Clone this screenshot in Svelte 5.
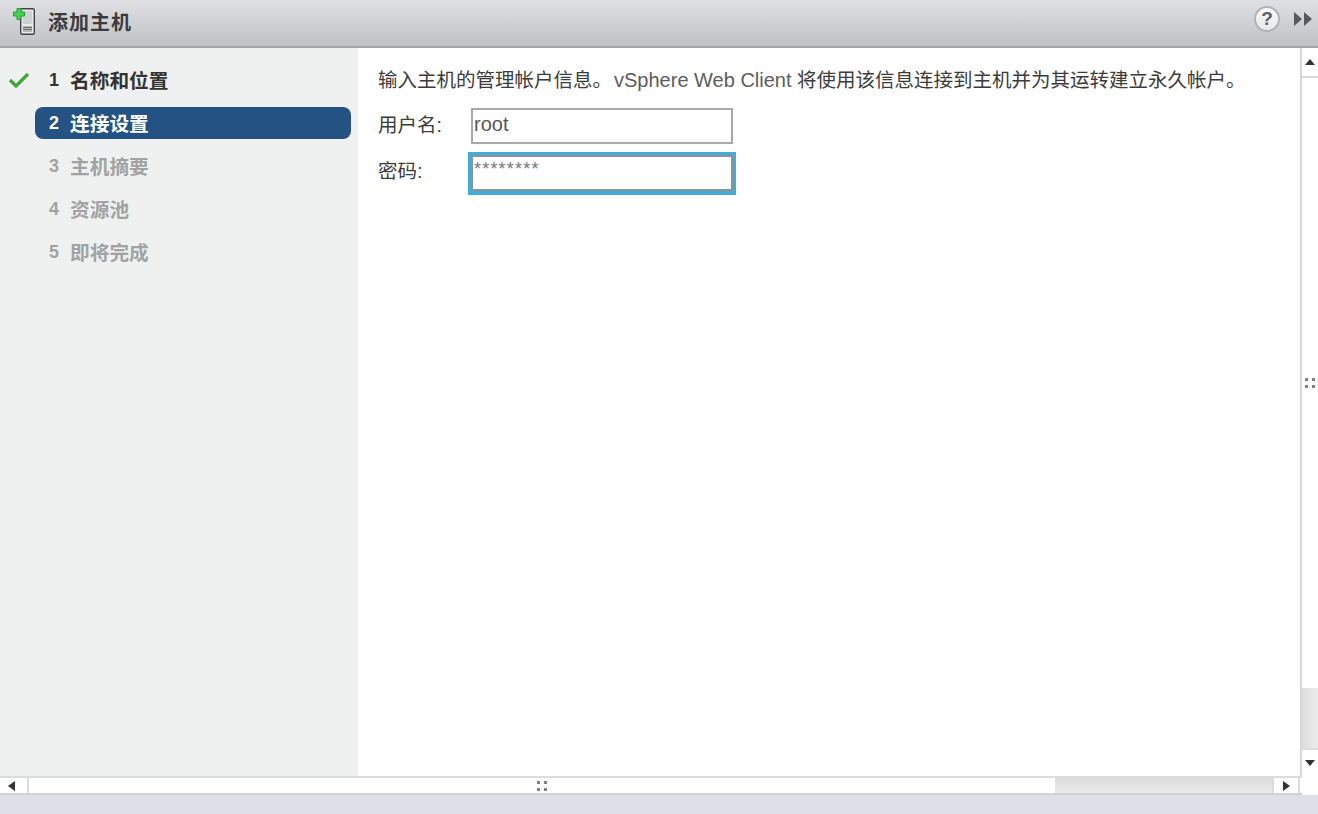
<script lang="ts">
	const steps = [
		{ n: 1, label: "名称和位置", state: "done" },
		{ n: 2, label: "连接设置", state: "active" },
		{ n: 3, label: "主机摘要", state: "todo" },
		{ n: 4, label: "资源池", state: "todo" },
		{ n: 5, label: "即将完成", state: "todo" },
	];
</script>

<div class="dialog">
	<header class="title-bar">
		<svg class="host-icon" width="26" height="30" viewBox="0 0 26 30">
			<rect x="9.7" y="2.7" width="13.6" height="25.6" rx="1.5" fill="#e9eaea" stroke="#3f4344" stroke-width="1.4" />
			<rect x="12" y="5" width="9" height="13" fill="#cfd1d1" />
			<rect x="12" y="20" width="9" height="6" fill="#b5b8b8" />
			<path d="M12 21.5h9M12 23.5h9" stroke="#5a5e5e" stroke-width="0.8" />
			<path d="M6 2.5h4v3.5h3.5v4H10v3.5H6V10H2.5V6H6z" fill="#46d052" stroke="#2b9a3a" stroke-width="1" stroke-linejoin="round" />
		</svg>
		<h1>添加主机</h1>
		<div class="title-tools">
			<span class="help">?</span>
			<svg width="18" height="14" viewBox="0 0 18 14"><path d="M0 0l8 7-8 7zM10 0l8 7-8 7z" fill="#565a5e" /></svg>
		</div>
	</header>

	<div class="main">
		<div class="viewport">
			<nav class="steps">
				{#each steps as step}
					<div class="step {step.state}">
						<span class="mark">
							{#if step.state === "done"}
								<svg width="22" height="18" viewBox="0 0 22 18"><path d="M2 9l6 6L20 3" fill="none" stroke="#3fa535" stroke-width="3.2" /></svg>
							{/if}
						</span>
						<span class="pill"><b>{step.n}</b><b class="name">{step.label}</b></span>
					</div>
				{/each}
			</nav>
			<section class="content">
				<p class="intro">输入主机的管理帐户信息。<span>vSphere Web Client</span> 将使用该信息连接到主机并为其运转建立永久帐户。</p>
				<div class="form">
					<label for="user">用户名:</label>
					<input id="user" value="root" />
					<label for="pw">密码:</label>
					<input id="pw" class="focused" value="********" />
				</div>
			</section>
		</div>

		<div class="vscroll">
			<button class="arrow" aria-label="up"><i class="tri up"></i></button>
			<div class="thumb-v"><span class="grip"></span></div>
			<div class="track-v"></div>
			<button class="arrow bottom" aria-label="down"><i class="tri down"></i></button>
		</div>

		<div class="hscroll">
			<button class="arrow-h start" aria-label="left"><i class="tri left"></i></button>
			<div class="thumb-h"><span class="grip"></span></div>
			<div class="track-h"></div>
			<button class="arrow-h end" aria-label="right"><i class="tri right"></i></button>
		</div>
		<div class="corner"></div>
	</div>

	<div class="foot"></div>
</div>

<style>
	:global(body) {
		margin: 0;
		font-family: "Liberation Sans", "Noto Sans CJK SC", sans-serif;
	}

	.dialog {
		width: 1318px;
		height: 814px;
		display: flex;
		flex-direction: column;
		background: #fff;
		overflow: hidden;
	}

	.title-bar {
		height: 42px;
		flex: none;
		box-sizing: content-box;
		display: flex;
		align-items: center;
		padding: 0 0 4px 11px;
		border-bottom: 2px solid #a2a4a6;
		background: linear-gradient(#dfe0e4, #bfc1c3);
	}

	.host-icon {
		margin-right: 11px;
		flex: none;
	}

	h1 {
		margin: 0;
		font-size: 20px;
		font-weight: 700;
		color: #3b3b3b;
		letter-spacing: 1px;
	}

	.title-tools {
		margin-left: auto;
		margin-right: 6px;
		padding-bottom: 4px;
		display: flex;
		align-items: center;
		gap: 14px;
	}

	.help {
		width: 26px;
		height: 26px;
		box-sizing: border-box;
		border: 2px solid #b0b2b4;
		border-radius: 50%;
		background: linear-gradient(#fafafa, #e8e8e8);
		color: #5c5f62;
		font-size: 19px;
		font-weight: 700;
		line-height: 22px;
		text-align: center;
	}

	.main {
		flex: 1;
		display: grid;
		grid-template-columns: 1fr 16px;
		grid-template-rows: 1fr 19px;
		min-height: 0;
	}

	.viewport {
		display: flex;
		min-height: 0;
		border-right: 2px solid #d8d8d8;
	}

	.steps {
		width: 358px;
		flex: none;
		box-sizing: border-box;
		padding-top: 16px;
		display: flex;
		flex-direction: column;
		gap: 11px;
		background: #eff1f1;
	}

	.step {
		display: flex;
		height: 32px;
		align-items: center;
	}

	.mark {
		width: 35px;
		flex: none;
		display: flex;
		justify-content: center;
		padding-left: 2px;
		box-sizing: border-box;
	}

	.pill {
		width: 316px;
		height: 32px;
		box-sizing: border-box;
		padding-left: 14px;
		display: flex;
		align-items: center;
		gap: 11px;
		border-radius: 8px;
		font-size: 19.7px;
		color: #333;
	}

	.pill b:first-child {
		font-size: 18px;
	}

	.name {
		padding-bottom: 2px;
	}

	.active .pill {
		background: #245282;
		color: #fff;
	}

	.todo .pill {
		color: #a1a3a3;
	}

	.content {
		flex: 1;
		padding: 19px 0 0 20px;
		color: #444;
	}

	.intro {
		margin: 0 0 15px;
		font-size: 19.5px;
		line-height: 26px;
		white-space: nowrap;
		color: #3c3c3c;
	}

	.intro span {
		margin-left: 2px;
		font-size: 20px;
		color: #5c5c5c;
	}

	.form {
		display: grid;
		grid-template-columns: 93px 262px;
		row-gap: 9px;
		align-items: center;
	}

	label {
		padding-bottom: 5px;
		font-size: 19.5px;
		color: #3c3c3c;
	}

	input {
		width: 262px;
		height: 36px;
		box-sizing: border-box;
		border: 2px solid #a9a9a9;
		padding: 0 0 4px 1px;
		font: 20px "Liberation Sans", sans-serif;
		color: #555;
		background: #fff;
		outline: none;
	}

	.focused {
		box-shadow: 0 0 0 3px #40aed8, 0 1px 0 3px #40aed8;
		height: 36px;
		padding-bottom: 8px;
		border-color: #8f9294;
		font-size: 18px;
		letter-spacing: 1.2px;
		color: #777;
		margin-top: 2px;
	}

	.vscroll {
		display: flex;
		flex-direction: column;
		background: #fff;
	}

	.arrow {
		height: 30px;
		flex: none;
		padding: 0;
		border: 0;
		border-bottom: 2px solid #dcdcdc;
		background: #fff;
		display: flex;
		align-items: center;
		justify-content: center;
	}

	.arrow.bottom {
		height: 28px;
		border-bottom: 0;
		border-top: 2px solid #dcdcdc;
	}

	.thumb-v {
		flex: 1;
		display: flex;
		align-items: center;
		justify-content: center;
	}

	.track-v {
		height: 60px;
		flex: none;
		background: linear-gradient(90deg, #dddddd, #ececec);
	}

	.grip {
		width: 10px;
		height: 10px;
		background: radial-gradient(circle at 1.5px 1.5px, #808080 1.5px, transparent 2px) 0 0 / 7px 7px;
	}

	.hscroll {
		display: flex;
		padding-right: 2px;
		border-top: 2px solid #dcdcdc;
		border-bottom: 2px solid #d2d2d2;
		background: #fff;
	}

	.arrow-h {
		width: 29px;
		flex: none;
		padding: 0;
		border: 0;
		background: #fff;
		display: flex;
		align-items: center;
		justify-content: center;
		border-right: 2px solid #dcdcdc;
	}

	.arrow-h.start {
		padding-right: 5px;
	}

	.arrow-h.end {
		width: 28px;
		border-left: 2px solid #dcdcdc;
	}

	.thumb-h {
		width: 1026px;
		flex: none;
		display: flex;
		align-items: center;
		justify-content: center;
	}

	.track-h {
		flex: 1;
		background: linear-gradient(#dcdcdc, #eaeaea);
	}

	.corner {
		background: #fff;
	}

	.foot {
		height: 19px;
		flex: none;
		background: #dde0e8;
	}

	.tri {
		display: block;
		width: 0;
		height: 0;
		border: 5px solid transparent;
	}

	.tri.up {
		border-bottom: 6px solid #333;
		border-top: 0;
	}

	.tri.down {
		border-top: 6px solid #333;
		border-bottom: 0;
	}

	.tri.left {
		border-right: 7px solid #333;
		border-left: 0;
	}

	.tri.right {
		border-left: 7px solid #333;
		border-right: 0;
	}
</style>
